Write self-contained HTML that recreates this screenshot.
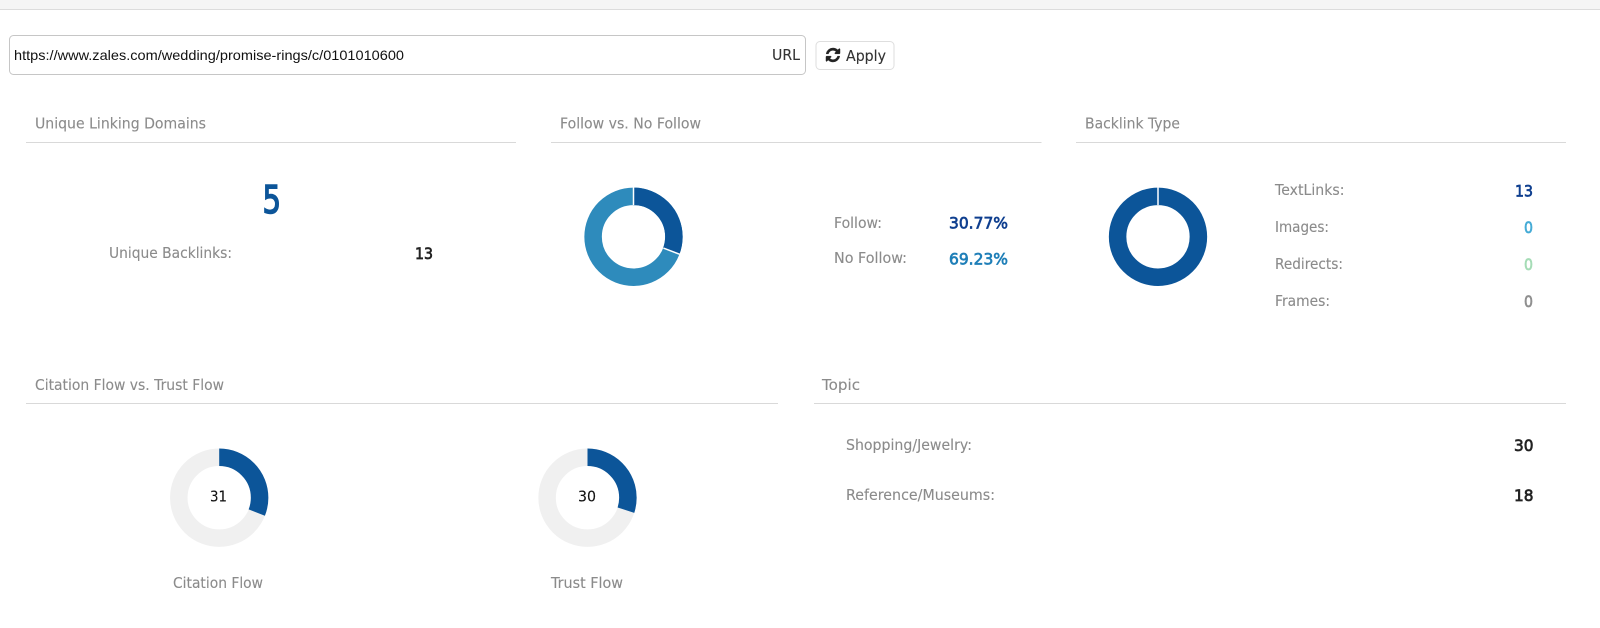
<!DOCTYPE html>
<html><head><meta charset="utf-8"><title>Backlinks</title>
<style>
html,body{margin:0;padding:0;background:#fff;width:1600px;height:628px;overflow:hidden}
svg{display:block}
text{font-family:"DejaVu Sans","Liberation Sans",sans-serif;font-size:15px;fill:#8b8b8b;stroke:#8b8b8b;stroke-width:.12}
.v{font-size:16px;stroke-width:.7}
</style></head><body>
<svg width="1600" height="628" viewBox="0 0 1600 628" xmlns="http://www.w3.org/2000/svg">
<rect width="1600" height="628" fill="#fff"/>
<rect width="1600" height="9" fill="#f5f5f5"/>
<rect y="9" width="1600" height="1" fill="#dcdcdc"/>

<!-- URL bar -->
<rect x="9.5" y="35.5" width="796" height="39" rx="4" fill="#fff" stroke="#c6c6c6"/>
<text x="14" y="60" textLength="390" lengthAdjust="spacingAndGlyphs" style="font-family:'Liberation Sans',sans-serif;font-size:14px;fill:#111;stroke:none">https://www.zales.com/wedding/promise-rings/c/0101010600</text>
<text x="772" y="60" textLength="28" lengthAdjust="spacingAndGlyphs" style="fill:#333;stroke:#333">URL</text>
<rect x="816" y="41.5" width="78" height="28" rx="4" fill="#fff" stroke="#dedede"/>
<g transform="translate(826 48) scale(.00911) translate(-128 -128)"><path fill="#222" stroke="#222" stroke-width="50" d="M1639 1056q0 5-1 7-64 268-268 434.5t-478 166.5q-146 0-282.5-55t-243.5-157l-129 129q-19 19-45 19t-45-19-19-45v-448q0-26 19-45t45-19h448q26 0 45 19t19 45-19 45l-137 137q71 66 161 102t187 36q134 0 250-65t186-179q11-17 53-117 8-23 30-23h192q13 0 22.5 9.5t9.5 22.5zm25-800v448q0 26-19 45t-45 19h-448q-26 0-45-19t-19-45 19-45l138-138q-148-137-349-137-134 0-250 65t-186 179q-11 17-53 117-8 23-30 23h-199q-13 0-22.5-9.5t-9.5-22.5v-7q65-268 270-434.5t480-166.5q146 0 284 55.5t245 156.5l130-129q19-19 45-19t45 19 19 45z"/></g>
<text x="846" y="61" textLength="40" lengthAdjust="spacingAndGlyphs" style="fill:#333;stroke:#333">Apply</text>

<!-- Section headings -->
<text x="35" y="128.5" textLength="171" lengthAdjust="spacingAndGlyphs">Unique Linking Domains</text>
<rect x="26" y="142" width="490" height="1" fill="#d9d9d9"/>
<text x="560" y="128.5" textLength="141" lengthAdjust="spacingAndGlyphs">Follow vs. No Follow</text>
<rect x="551" y="142" width="490.5" height="1" fill="#d9d9d9"/>
<text x="1085" y="128.5" textLength="95" lengthAdjust="spacingAndGlyphs">Backlink Type</text>
<rect x="1076" y="142" width="490" height="1" fill="#d9d9d9"/>
<text x="35" y="390" textLength="189" lengthAdjust="spacingAndGlyphs">Citation Flow vs. Trust Flow</text>
<rect x="26" y="403" width="752" height="1" fill="#d9d9d9"/>
<text x="822" y="390" textLength="38" lengthAdjust="spacingAndGlyphs">Topic</text>
<rect x="814" y="403" width="752" height="1" fill="#d9d9d9"/>

<!-- Unique Linking Domains -->
<text x="262.5" y="213" textLength="18.5" lengthAdjust="spacingAndGlyphs" style="font-size:38px;fill:#0c5599;stroke:#0c5599;stroke-width:1.5">5</text>
<text x="109" y="258" textLength="123" lengthAdjust="spacingAndGlyphs">Unique Backlinks:</text>
<text class="v" x="415" y="259" textLength="18" lengthAdjust="spacingAndGlyphs" style="fill:#222;stroke:#222">13</text>

<!-- Follow donut -->
<circle cx="633.5" cy="236.8" r="40.4" fill="none" stroke="#2e8bbc" stroke-width="17.5"/>
<circle cx="633.5" cy="236.8" r="40.4" fill="none" stroke="#0c5599" stroke-width="17.5" pathLength="100" stroke-dasharray="30.77 69.23" transform="rotate(-90 633.5 236.8)"/>
<line x1="633.5" y1="187" x2="633.5" y2="205" stroke="#fff" stroke-width="1.5"/>
<line x1="663.4" y1="248.1" x2="680.8" y2="254.7" stroke="#fff" stroke-width="1.5"/>
<text x="834" y="228" textLength="48" lengthAdjust="spacingAndGlyphs">Follow:</text>
<text x="834" y="263" textLength="73" lengthAdjust="spacingAndGlyphs">No Follow:</text>
<text class="v" x="949" y="228.5" textLength="59" lengthAdjust="spacingAndGlyphs" style="fill:#0f3f8f;stroke:#0f3f8f">30.77%</text>
<text class="v" x="949" y="264.5" textLength="59" lengthAdjust="spacingAndGlyphs" style="fill:#1f7fb8;stroke:#1f7fb8">69.23%</text>

<!-- Backlink donut -->
<circle cx="1158" cy="236.8" r="40.4" fill="none" stroke="#0c5599" stroke-width="17.5"/>
<line x1="1158" y1="187" x2="1158" y2="205" stroke="#fff" stroke-width="1.5"/>
<text x="1275" y="195" textLength="69.5" lengthAdjust="spacingAndGlyphs">TextLinks:</text>
<text x="1275" y="232" textLength="54" lengthAdjust="spacingAndGlyphs">Images:</text>
<text x="1275" y="269" textLength="68" lengthAdjust="spacingAndGlyphs">Redirects:</text>
<text x="1275" y="306" textLength="55" lengthAdjust="spacingAndGlyphs">Frames:</text>
<text class="v" x="1515" y="196.5" textLength="18" lengthAdjust="spacingAndGlyphs" style="fill:#0f3f8f;stroke:#0f3f8f">13</text>
<text class="v" x="1524" y="233" textLength="9" lengthAdjust="spacingAndGlyphs" style="fill:#45abd6;stroke:#45abd6">0</text>
<text class="v" x="1524" y="270" textLength="9" lengthAdjust="spacingAndGlyphs" style="fill:#a5dcb6;stroke:#a5dcb6">0</text>
<text class="v" x="1524" y="307" textLength="9" lengthAdjust="spacingAndGlyphs" style="fill:#8f8f8f;stroke:#8f8f8f">0</text>

<!-- Citation Flow -->
<circle cx="219.2" cy="497.7" r="40.4" fill="none" stroke="#f0f0f0" stroke-width="17.5"/>
<circle cx="219.2" cy="497.7" r="40.4" fill="none" stroke="#0c5599" stroke-width="17.5" pathLength="100" stroke-dasharray="31 69" transform="rotate(-90 219.2 497.7)"/>
<text x="210" y="501.5" textLength="17" lengthAdjust="spacingAndGlyphs" style="fill:#111;stroke:#111">31</text>
<text x="173" y="588" textLength="90" lengthAdjust="spacingAndGlyphs">Citation Flow</text>

<!-- Trust Flow -->
<circle cx="587.5" cy="497.7" r="40.4" fill="none" stroke="#f0f0f0" stroke-width="17.5"/>
<circle cx="587.5" cy="497.7" r="40.4" fill="none" stroke="#0c5599" stroke-width="17.5" pathLength="100" stroke-dasharray="30 70" transform="rotate(-90 587.5 497.7)"/>
<text x="578" y="501.5" textLength="18" lengthAdjust="spacingAndGlyphs" style="fill:#111;stroke:#111">30</text>
<text x="551" y="588" textLength="72" lengthAdjust="spacingAndGlyphs">Trust Flow</text>

<!-- Topic -->
<text x="846" y="450" textLength="126" lengthAdjust="spacingAndGlyphs">Shopping/Jewelry:</text>
<text x="846" y="500" textLength="149" lengthAdjust="spacingAndGlyphs">Reference/Museums:</text>
<text class="v" x="1514" y="451" textLength="19.5" lengthAdjust="spacingAndGlyphs" style="fill:#222;stroke:#222">30</text>
<text class="v" x="1514" y="501" textLength="19.5" lengthAdjust="spacingAndGlyphs" style="fill:#222;stroke:#222">18</text>
</svg>
</body></html>
